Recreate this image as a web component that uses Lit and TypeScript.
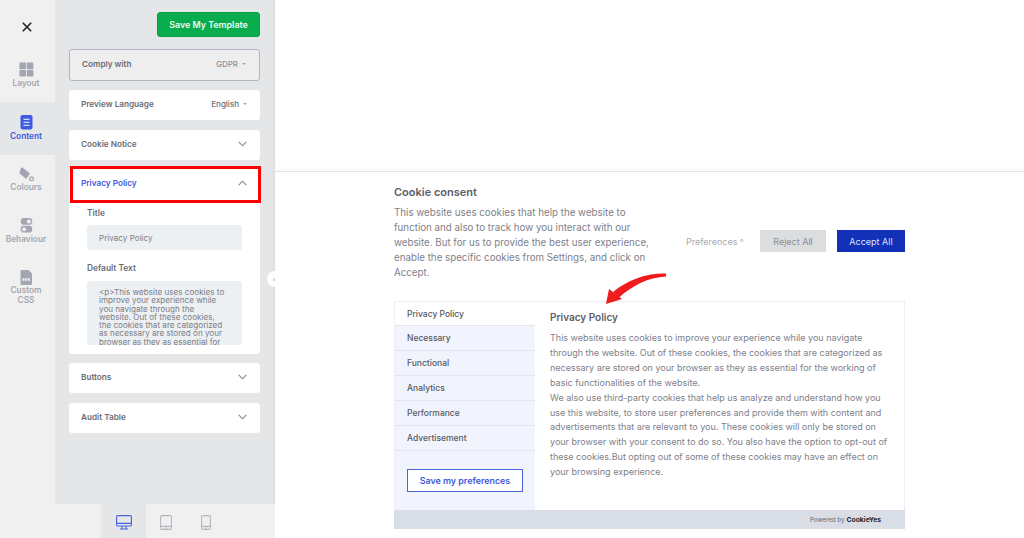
import { LitElement, html, css, svg } from "lit";
import { customElement } from "lit/decorators.js";

const chevDown = html`<svg class="chev" width="9" height="6" viewBox="0 0 12 8"><path d="M1 1.2 6 6.4l5-5.2" fill="none" stroke="#85878f" stroke-width="1.5"/></svg>`;
const chevUp = html`<svg class="chev" width="9" height="6" viewBox="0 0 12 8"><path d="M1 6.8 6 1.6l5 5.2" fill="none" stroke="#85878f" stroke-width="1.5"/></svg>`;
const G = "#a3a5b2";
const railIcons = {
  layout: svg`<rect x="0.4" y="0.6" width="6.6" height="6.6" rx=".8" fill="${G}"/><rect x="7.8" y="0.6" width="6.6" height="6.6" rx=".8" fill="${G}"/><rect x="0.4" y="8" width="6.6" height="6.6" rx=".8" fill="${G}"/><rect x="7.8" y="8" width="6.6" height="6.6" rx=".8" fill="${G}"/>`,
  content: svg`<rect x="1.5" y="0" width="12" height="14.5" rx="2" fill="#3d5ae0"/><path d="M4.5 4.2h6M4.5 7.2h6M4.5 10.2h6" stroke="#fff" stroke-width="1.1"/>`,
  colours: svg`<path d="M3.6.6 11 6.6 7.2 12 .4 6.2 2 .8Z" fill="${G}"/><circle cx="12.6" cy="11.8" r="1.9" fill="none" stroke="${G}" stroke-width="1.2"/>`,
  behaviour: svg`<rect x="1.7" y="0" width="11.6" height="6.8" rx="3.4" fill="${G}"/><circle cx="9.9" cy="3.4" r="2" fill="#f0f0f0"/><rect x="1.7" y="7.8" width="11.6" height="6.8" rx="3.4" fill="${G}"/><circle cx="5.1" cy="11.2" r="2" fill="#f0f0f0"/>`,
  css: svg`<path d="M2.5 0h7l3.5 3.5V14a1 1 0 0 1-1 1h-9.5a1 1 0 0 1-1-1V1a1 1 0 0 1 1-1Z" fill="${G}"/><path d="M3.5 9.5h8" stroke="#f0f0f0" stroke-width="2.6" stroke-dasharray="2 .7"/>`,
};

@customElement("app-root")
export class AppRoot extends LitElement {
  static styles = css`
    :host { display: block; width: 1024px; height: 538px; overflow: hidden; font-family: Inter, "Liberation Sans", sans-serif; background: #fff; color: #6b6d76; }
    .app { display: flex; height: 538px; }
    .left { width: 275px; flex: none; display: flex; flex-direction: column; position: relative; }
    .top { display: flex; flex: 1; min-height: 0; }
    .rail { width: 55px; flex: none; background: #f0f0f0; display: flex; flex-direction: column; align-items: stretch; }
    .close { height: 49px; display: flex; align-items: center; justify-content: center; padding: 4px 2px 0 0; box-sizing: border-box; margin-bottom: 1px; }
    .rail-item { height: 51.5px; box-sizing: border-box; padding: 12px 3px 0 0; display: flex; flex-direction: column; align-items: center; gap: 1px; font-size: 8.3px; font-weight: 600; color: #a5a7b0; line-height: 9.5px; text-align: center; }
    .rail-item.on { background: #e5e6e8; color: #3d5ae0; height: 53px; padding-top: 13px; gap: 2px; }
    .panel { flex: 1; background: #e5e6e8; padding: 12px 15px 0 14px; display: flex; flex-direction: column; gap: 9.5px; box-shadow: inset -3px 0 3px -2px #d8d9dc; }
    .save { align-self: flex-end; width: 103px; height: 25px; box-sizing: border-box; background: #0aad4e; border: 1px solid #08a046; border-radius: 3px; color: #eafbf0; font-size: 8.9px; font-weight: 600; display: flex; align-items: center; justify-content: center; margin-bottom: 2px; }
    .card { background: #fff; border-radius: 3px; font-size: 8.2px; font-weight: 600; color: #6a6c74; }
    .row { height: 30px; display: flex; align-items: center; justify-content: space-between; padding: 0 13px 2px 12px; box-sizing: border-box; position: relative; }
    .comply { background: #eeeeef; border: 1px solid #b3b5c3; border-radius: 3px; height: 32px; padding: 0 13px 1px 12px; }
    .sel { display: flex; align-items: center; gap: 4px; font-weight: 500; font-size: 8px; }
    .sel.light { color: #8c8e96; }
    .caret { width: 0; height: 0; border-left: 2.5px solid transparent; border-right: 2.5px solid transparent; border-top: 2.5px solid #a2a4ae; margin-bottom: 1px; }
    .policy { height: 184.5px; display: flex; flex-direction: column; }
    .policy .row { color: #3d5ae0; height: 33px; flex: none; padding-bottom: 5px; }
    .redbox { position: absolute; left: 1px; top: -3px; width: 191px; height: 37px; box-sizing: border-box; border: 3px solid #f00; }
    .field { padding: 0 18px; display: flex; flex-direction: column; }
    .lab { font-size: 8.4px; font-weight: 600; color: #6a6c74; line-height: 12px; margin-top: 5px; }
    .inp { margin-top: 6px; background: #edf0f3; border-radius: 3px; height: 25px; display: flex; align-items: center; padding: 0 12px; font-size: 8.1px; font-weight: 400; color: #7b7d86; }
    .lab2 { margin-top: 12px; }
    .area { margin-top: 7px; background: #edf0f3; border-radius: 3px; height: 64px; overflow: hidden; padding: 7px 16px 0 12px; font-size: 8.1px; font-weight: 400; line-height: 8.3px; color: #7b7d86; box-sizing: border-box; }
    .bottom { height: 34px; flex: none; background: #f0f0f0; display: flex; padding-left: 101px; }
    .dev { width: 45px; display: flex; align-items: center; justify-content: center; padding-top: 3px; box-sizing: border-box; }
    .dev.on { background: #e5e6e8; }
    .dev2 { width: 40px; }
    .handle { position: absolute; left: 267px; top: 271px; width: 16px; height: 16px; border-radius: 50%; background: #fff; z-index: 1; }
    .handle::after { content: ""; position: absolute; left: 6px; top: 6.5px; width: 2px; height: 3px; background: #d5d6ec; }
    .right { flex: 1; display: flex; flex-direction: column; position: relative; background: #fff; }
    .blank { flex: none; height: 171px; border-bottom: 1px solid #e2e2ec; background: linear-gradient(#fff 156px, #fbfbfb); }
    .stage { padding: 13px 119px 0 119px; flex: 1; position: relative; background: #fff; }
    .banner { display: flex; height: 115px; }
    .b-text { width: 262px; flex: none; }
    h1 { margin: 0; font-size: 11px; font-weight: 600; line-height: 14px; color: #5c5e68; }
    .b-text p { margin: 7px 0 0; font-size: 9.75px; line-height: 14.9px; color: #7e808a; }
    .b-act { display: flex; align-items: center; padding: 0 0 3px 30px; font-size: 9px; flex: 1; }
    .pref { color: #a8aab1; width: 74px; flex: none; display: flex; gap: 2px; }
    .rej { width: 66px; height: 22px; display: flex; align-items: center; justify-content: center; background: #dcdddf; color: #8a8c92; flex: none; }
    .acc { width: 68px; height: 22px; display: flex; align-items: center; justify-content: center; background: #1230b8; color: #dfe3f8; flex: none; margin-left: 11px; }
    .modal { width: 511px; height: 228px; margin-top: 1px; border: 1px solid #eceef3; border-bottom: 0; box-sizing: border-box; display: flex; flex-direction: column; }
    .m-main { flex: 1; display: flex; min-height: 0; }
    .tabs { width: 140px; flex: none; background: #f1f4fc; display: flex; flex-direction: column; }
    .tab { height: 25px; flex: none; box-sizing: border-box; border-bottom: 1px solid #e3e6ee; display: flex; align-items: center; padding-left: 12px; font-size: 8.5px; color: #565862; font-weight: 500; }
    .tab.on { background: #fff; height: 24px; }
    .savep { margin: 18px 0 0 12px; width: 116px; height: 23px; box-sizing: border-box; border: 1px solid #4a64d6; background: #fff; color: #3d5ae0; font-size: 8.9px; font-weight: 600; display: flex; align-items: center; justify-content: center; }
    .m-body { flex: 1; padding: 8px 14px 0 15px; }
    h2 { margin: 0; font-size: 10px; font-weight: 600; color: #5c5e68; line-height: 14px; }
    .m-body p { margin: 7px 0 0; font-size: 9px; line-height: 14.9px; color: #7e808a; white-space: nowrap; }
    .foot { height: 19px; flex: none; background: #d8dde6; margin: 0 -1px; display: flex; align-items: center; justify-content: flex-end; padding-right: 24px; font-size: 6.2px; color: #66686f; gap: 2px; }
    .foot b { color: #25262a; font-weight: 700; font-size: 6.8px; }
    .arrow { position: absolute; left: 325px; top: 270px; pointer-events: none; }
  `;

  render() {
    const rail = (k: keyof typeof railIcons, label: unknown, on = false) => html`
      <div class="rail-item ${on ? "on" : ""}">
        <svg width="15" height="15.5" viewBox="0 0 15 15.5">${railIcons[k]}</svg>
        <span>${label}</span>
      </div>`;
    return html`<div class="app">
      <div class="left">
        <div class="top">
          <nav class="rail">
            <div class="close"><svg width="10" height="10" viewBox="0 0 10 10"><path d="M.8.8l8.4 8.4M9.2.8.8 9.2" stroke="#222" stroke-width="1.6"/></svg></div>
            ${rail("layout", "Layout")}
            ${rail("content", "Content", true)}
            ${rail("colours", "Colours")}
            ${rail("behaviour", "Behaviour")}
            ${rail("css", html`Custom<br />CSS`)}
          </nav>
          <section class="panel">
            <div class="save">Save My Template</div>
            <div class="card row comply"><span>Comply with</span><span class="sel light">GDPR <i class="caret"></i></span></div>
            <div class="card row"><span>Preview Language</span><span class="sel">English <i class="caret"></i></span></div>
            <div class="card row"><span>Cookie Notice</span>${chevDown}</div>
            <div class="card policy">
              <div class="row"><span>Privacy Policy</span>${chevUp}<div class="redbox"></div></div>
              <div class="field">
                <div class="lab">Title</div>
                <div class="inp">Privacy Policy</div>
                <div class="lab lab2">Default Text</div>
                <div class="area">&lt;p&gt;This website uses cookies to improve your experience while you navigate through the website. Out of these cookies, the cookies that are categorized as necessary are stored on your browser as they as essential for</div>
              </div>
            </div>
            <div class="card row"><span>Buttons</span>${chevDown}</div>
            <div class="card row"><span>Audit Table</span>${chevDown}</div>
          </section>
        </div>
        <div class="bottom">
          <div class="dev on"><svg width="16" height="15" viewBox="0 0 16 15" fill="none" stroke="#4a64e0" stroke-width="1.1"><rect x=".6" y=".6" width="14.8" height="10.4" rx="1"/><path d="M.6 8.4h14.8M6 11v2.6M10 11v2.6M4 14h8"/></svg></div>
          <div class="dev dev2"><svg width="12" height="15" viewBox="0 0 12 15" fill="none" stroke="#b4b5bf" stroke-width="1.1"><rect x=".6" y=".6" width="10.8" height="13.8" rx="1.4"/><path d="M.6 11.4h10.8M6 11.4v3"/></svg></div>
          <div class="dev dev2"><svg width="10" height="15" viewBox="0 0 10 15" fill="none" stroke="#b4b5bf" stroke-width="1.1"><rect x=".6" y=".6" width="8.8" height="13.8" rx="1.4"/><path d="M.6 11.4h8.8M5 11.4v3"/></svg></div>
        </div>
        <div class="handle"></div>
      </div>
      <main class="right">
        <div class="blank"></div>
        <div class="stage">
          <div class="banner">
            <div class="b-text">
              <h1>Cookie consent</h1>
              <p>This website uses cookies that help the website to function and also to track how you interact with our website. But for us to provide the best user experience, enable the specific cookies from Settings, and click on Accept.</p>
            </div>
            <div class="b-act">
              <span class="pref">Preferences <span>^</span></span>
              <span class="rej">Reject All</span>
              <span class="acc">Accept All</span>
            </div>
          </div>
          <div class="modal">
            <div class="m-main">
              <div class="tabs">
                <div class="tab on">Privacy Policy</div>
                <div class="tab">Necessary</div>
                <div class="tab">Functional</div>
                <div class="tab">Analytics</div>
                <div class="tab">Performance</div>
                <div class="tab">Advertisement</div>
                <div class="savep">Save my preferences</div>
              </div>
              <div class="m-body">
                <h2>Privacy Policy</h2>
                <p>This website uses cookies to improve your experience while you navigate<br />through the website. Out of these cookies, the cookies that are categorized as<br />necessary are stored on your browser as they as essential for the working of<br />basic functionalities of the website.<br />We also use third-party cookies that help us analyze and understand how you<br />use this website, to store user preferences and provide them with content and<br />advertisements that are relevant to you. These cookies will only be stored on<br />your browser with your consent to do so. You also have the option to opt-out of<br />these cookies.But opting out of some of these cookies may have an effect on<br />your browsing experience.</p>
              </div>
            </div>
            <div class="foot"><span>Powered by</span> <b>CookieYes</b></div>
          </div>
        </div>
        <svg class="arrow" width="70" height="38" viewBox="0 0 70 38"><path d="M66 3.6C46 3 28 10 13 22L19 27.5C33 15.5 48 7.5 66 6.6Z" fill="#ee1c1c"/><path d="M6 34 9 19 22 29Z" fill="#ee1c1c"/></svg>
      </main>
    </div>`;
  }
}
